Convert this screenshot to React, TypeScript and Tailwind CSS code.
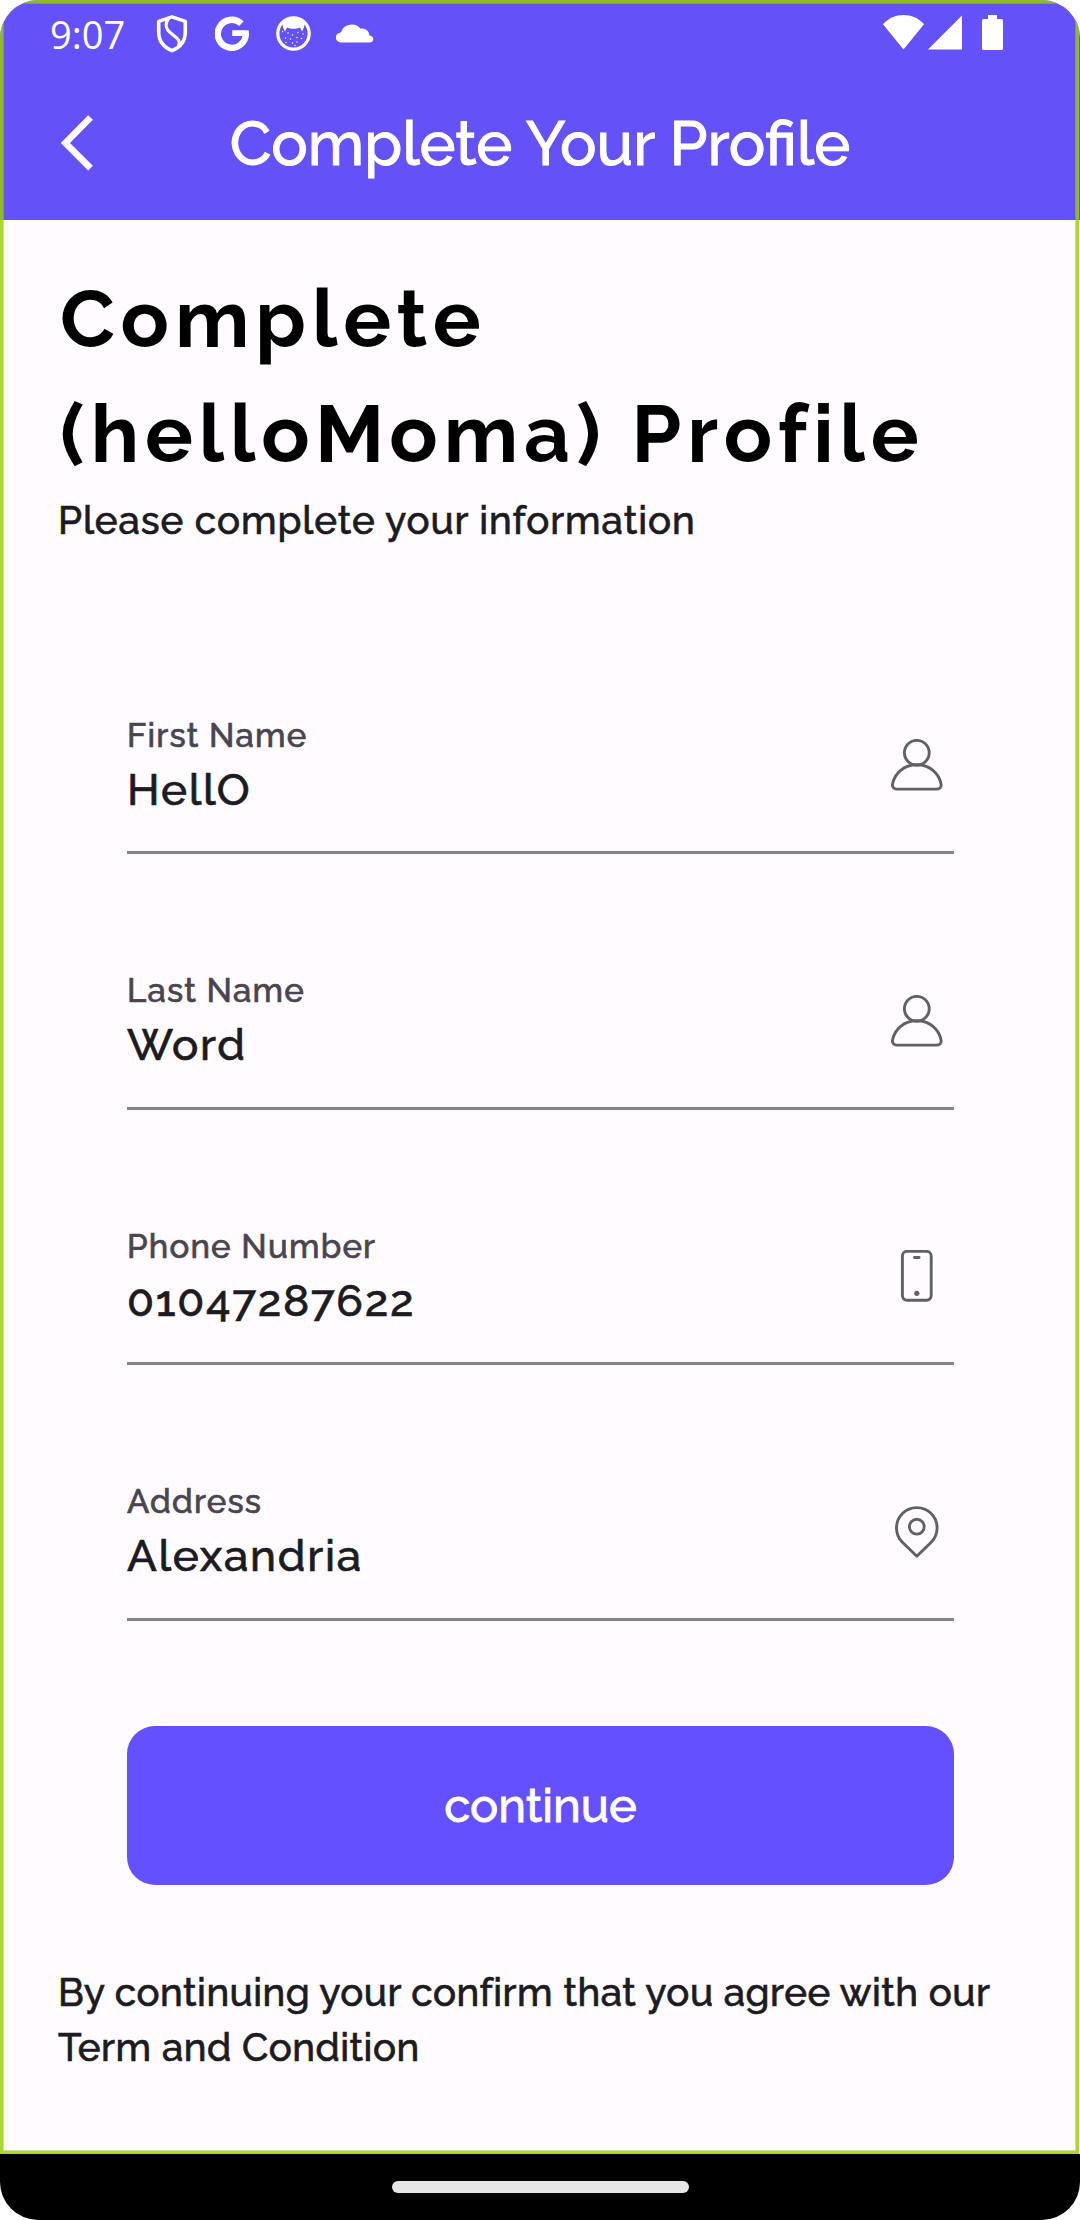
import React from 'react';

type IconProps = { className?: string };

const strokeProps = {
  fill: 'none',
  stroke: 'currentColor',
  strokeWidth: 2.9,
  strokeLinecap: 'round' as const,
  strokeLinejoin: 'round' as const,
};

const PersonIcon = ({ className }: IconProps) => (
  <svg className={className} viewBox="0 0 52 52" {...strokeProps}>
    <circle cx="25.8" cy="13.8" r="12.4" />
    <path d="M1.5 45.2C3.6 34 13 25.8 25.8 25.8S48 34 50.1 45.2C50.6 47.9 48.6 50.1 46 50.1H5.6C3 50.1 1 47.9 1.5 45.2Z" />
  </svg>
);

const PhoneIcon = ({ className }: IconProps) => (
  <svg className={className} viewBox="0 0 52 52" {...strokeProps}>
    <rect x="11.4" y="1.4" width="28.8" height="48.8" rx="4.6" />
    <path d="M23.5 7.5h4.6" />
    <circle cx="25.8" cy="43.3" r="2.6" fill="currentColor" stroke="none" />
  </svg>
);

const PinIcon = ({ className }: IconProps) => (
  <svg className={className} viewBox="0 0 52 52" {...strokeProps}>
    <path d="M25.8 50.2 11.4 36.2A20.3 20.3 0 1 1 40.2 36.2Z" />
    <circle cx="25.8" cy="20.7" r="7.4" />
  </svg>
);

const ShieldIcon = ({ className }: IconProps) => (
  <svg className={className} viewBox="0 0 32 38" fill="none" stroke="currentColor" strokeLinejoin="round">
    <path strokeWidth="3.6" d="M16 1.9 29.3 6.4V17C29.3 26 24 32.4 16 35.6 8 32.4 2.7 26 2.7 17V6.4Z" />
    <path strokeWidth="3.2" d="M13 2.8C8.6 9 9 13.6 15 18.3C21.5 23.4 25 25 22.4 31.2" />
  </svg>
);

const GoogleIcon = ({ className }: IconProps) => (
  <svg className={className} viewBox="0 0 34 35" fill="none">
    <path d="M26.4 7.6A14 14 0 1 0 30.8 17.3" stroke="currentColor" strokeWidth="6.4" />
    <path d="M17.2 14.3H33.7C34 16.6 34 18.4 33.6 20.1H17.2Z" fill="currentColor" />
  </svg>
);

const catSpots = [
  [6.5, 15.5], [12, 17], [16.5, 19], [22, 16.5], [27, 18], [9.5, 22], [14.5, 23], [21, 21.5],
  [25.5, 22.5], [10, 26.5], [16.5, 27], [21, 26], [19, 29.5],
];

const CatIcon = ({ className }: IconProps) => (
  <svg className={className} viewBox="0 0 35 35" fill="currentColor">
    <circle cx="17.5" cy="17.5" r="15.7" fill="none" stroke="currentColor" strokeWidth="3.2" />
    <path d="M6 7.5Q17.5-3 29 7.5L27.5 12.5 26 15.5 24 11.5C20.5 13.3 14.5 13.3 11 11.5L9 15.5 7.5 12.5Z" />
    {catSpots.map(([x, y]) => (
      <circle key={`${x}-${y}`} cx={x} cy={y} r="0.75" />
    ))}
  </svg>
);

const CloudIcon = ({ className }: IconProps) => (
  <svg className={className} viewBox="0 0 38 21" fill="currentColor">
    <path d="M5 20.5A5 5 0 0 1 4.8 10.4 11.5 11.5 0 0 1 24.5 6.7C29 5.6 33.3 9 33.5 13.4 38.5 14 38.5 20.5 33.5 20.5Z" />
  </svg>
);

const StatusBar = () => (
  <div className="flex h-[66px] items-start justify-between pt-[15px] pr-[77px] pl-[50px]">
    <div className="flex items-start text-white">
      <span className="h-[38px] w-[106px] font-['Open_Sans','Noto_Sans',sans-serif] text-[38px] leading-[38px] font-normal">9:07</span>
      <ShieldIcon className="h-[38px] w-[32px]" />
      <GoogleIcon className="mt-px ml-[27px] h-[35px] w-[34px]" />
      <CatIcon className="mt-px ml-[27px] h-[35px] w-[35px]" />
      <CloudIcon className="mt-[7px] ml-[24.5px] h-[21px] w-[38px]" />
    </div>
    <div className="flex items-start text-white">
      <svg className="h-[35px] w-[41px]" viewBox="0 0 41 35" fill="currentColor">
        <path d="M0 9.2C11-3 30-3 41 9.2L20.5 34.5Z" />
      </svg>
      <svg className="ml-[4px] h-[35px] w-[34px]" viewBox="0 0 34 35" fill="currentColor">
        <path d="M34 .5V34.5H0Z" />
      </svg>
      <svg className="ml-5 h-[35px] w-[21px]" viewBox="0 0 21 35" fill="currentColor">
        <path d="M6 0H15V4H19.5Q21 4 21 5.5V33.5Q21 35 19.5 35H1.5Q0 35 0 33.5V5.5Q0 4 1.5 4H6Z" />
      </svg>
    </div>
  </div>
);

const Header = () => (
  <header className="h-[220px] bg-[#6451f8]">
    <StatusBar />
    <div className="grid h-[154px] grid-cols-[1fr_auto_1fr] items-center pl-[60px]">
      <svg className="h-[56px] w-[34px] text-white" viewBox="0 0 34 56" fill="none" stroke="currentColor" strokeWidth="6.6">
        <path d="M30.5 2.5 5.4 28 30.5 53.2" />
      </svg>
      <h1 className="-ml-[60px] pt-px text-[61px] leading-[80px] text-white [-webkit-text-stroke:1px]">Complete Your Profile</h1>
    </div>
  </header>
);

const fields = [
  { label: 'First Name', value: 'HellO', Icon: PersonIcon },
  { label: 'Last Name', value: 'Word', Icon: PersonIcon },
  { label: 'Phone Number', value: '01047287622', Icon: PhoneIcon },
  { label: 'Address', value: 'Alexandria', Icon: PinIcon },
];

export default function App() {
  return (
    <div className="h-[2220px] w-[1080px] bg-white font-['Raleway',sans-serif] font-medium">
      <div className="relative flex h-full flex-col overflow-hidden rounded-[38px] bg-[#fffbff] text-[#1c1b1f]">
        <Header />
        <main className="flex h-[1934px] flex-col pt-[42px] [-webkit-text-stroke:0.7px]">
          <section className="pl-[58px]">
            <h2 className="ml-[2px] w-[900px] text-[80px] leading-[115px] font-bold tracking-[5.9px] text-black [-webkit-text-stroke:0px]">
              Complete (helloMoma) Profile
            </h2>
            <p className="mt-px text-[38.5px] leading-[55px] tracking-[0.93px]">Please complete your information</p>
          </section>
          <form className="mt-[143px] ml-[127px] flex w-[827px] flex-col">
            <div className="flex flex-col gap-[92.5px]">
              {fields.map(({ label, value, Icon }) => (
                <div key={label} className="flex h-[163px] items-start justify-between border-b-3 border-[#79747e]/90 pt-[22.8px] pr-[11px]">
                  <div>
                    <div className="text-[33px] leading-[44px] tracking-[1.2px] text-[#49454f]">{label}</div>
                    <div className="-mt-px text-[44px] leading-[66px] tracking-[1.75px]">{value}</div>
                  </div>
                  <Icon className="mt-[25.5px] h-[52px] w-[52px] text-[#626063]" />
                </div>
              ))}
            </div>
            <button type="button" className="mt-[105.5px] h-[159px] rounded-[28px] bg-[#6450ff] pt-[2px] text-[47px] text-white [-webkit-text-stroke:0.8px]">
              continue
            </button>
          </form>
          <p className="mt-[79.5px] pl-[58px] text-[38.5px] leading-[55.3px] tracking-[0.5px]">
            By continuing your confirm that you agree with our
            <br />
            Term and Condition
          </p>
        </main>
        <footer className="flex flex-1 justify-center bg-black pt-[27px]">
          <div className="h-[12px] w-[297px] rounded-full bg-[#e6e6e6]" />
        </footer>
        <div className="pointer-events-none absolute top-0 right-px left-0 h-[2154px] border-[3px] border-[#99cf00]/82">
          <div className="h-full w-full border border-[#99cf00]/50" />
        </div>
      </div>
    </div>
  );
}
